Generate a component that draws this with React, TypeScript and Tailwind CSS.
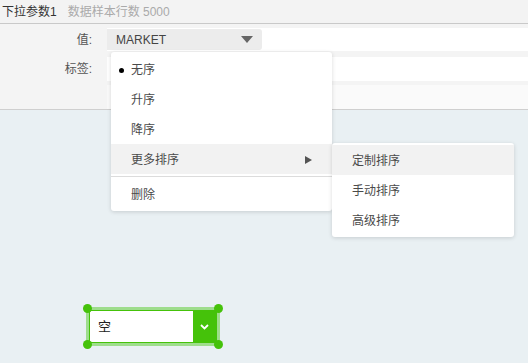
import React from 'react'

const font = { fontFamily: '"Liberation Sans", "Noto Sans CJK SC", sans-serif' }

type Item = { label: string; checked?: boolean; hover?: boolean; sub?: boolean }

const sortItems: Item[] = [
  { label: '无序', checked: true },
  { label: '升序' },
  { label: '降序' },
  { label: '更多排序', hover: true, sub: true },
]

const subItems: Item[] = [
  { label: '定制排序', hover: true },
  { label: '手动排序' },
  { label: '高级排序' },
]

function MenuRow({ item }: { item: Item }) {
  return (
    <div
      className={
        'relative flex items-center h-[30px] pl-[20px] pr-3 pt-px text-[12px] text-[#4a4a4a] ' +
        (item.hover ? 'bg-[#f2f2f2]' : '')
      }
    >
      {item.checked && <span className="absolute left-[8px] top-[14px] w-[5px] h-[5px] rounded-full bg-black" />}
      <span>{item.label}</span>
      {item.sub && (
        <svg className="ml-auto mr-[8px]" width="7" height="8" viewBox="0 0 7 8">
          <path d="M0 0 L7 4 L0 8 Z" fill="#555" />
        </svg>
      )}
    </div>
  )
}

export default function App() {
  return (
    <div className="relative w-[528px] h-[363px] overflow-hidden bg-[#e9f0f3]" style={font}>
      {/* header */}
      <div className="flex items-center h-[24px] bg-[#f3f3f3] border-b border-[#c9c9c9] text-[12px]">
        <span className="pl-[2px] text-[#333]">下拉参数1</span>
        <span className="pl-[11px] text-[#aaa]">数据样本行数 5000</span>
      </div>

      {/* form panel */}
      <div className="bg-[#f4f4f4] border-b border-[#cfcfcf] pt-[4px]">
        <div className="flex items-center h-[23px]">
          <div className="w-[92px] text-right text-[12px] text-[#555]">值:</div>
          <div className="ml-[15px] flex-1 h-full bg-white flex items-center">
            <div className="flex items-center w-[155px] h-[21px] bg-[#ececec] rounded-r-[3px] pl-[9px] pr-[9px] text-[12px] text-[#444]">
              <span>MARKET</span>
              <svg className="ml-auto" width="12" height="7" viewBox="0 0 12 7">
                <path d="M0 0 L12 0 L6 7 Z" fill="#666" />
              </svg>
            </div>
          </div>
        </div>
        <div className="flex items-center h-[24px] mt-[6px]">
          <div className="w-[92px] text-right text-[12px] text-[#555]">标签:</div>
          <div className="ml-[15px] flex-1 h-full bg-white" />
        </div>
        <div className="flex items-center h-[24px] mt-[4px]">
          <div className="w-[92px]" />
          <div className="ml-[15px] flex-1 h-full bg-[#fafafa]" />
        </div>
      </div>

      {/* context menu */}
      <div className="absolute left-[111px] top-[52px] w-[221px] py-[2px] bg-white rounded-[3px] shadow-[0_1px_4px_rgba(0,0,0,0.15)]">
        {sortItems.map((it) => (
          <MenuRow key={it.label} item={it} />
        ))}
        <div className="my-[2px] h-px bg-[#dcdcdc]" />
        <MenuRow item={{ label: '删除' }} />
      </div>

      {/* submenu */}
      <div className="absolute left-[332px] top-[143px] w-[182px] py-[2px] bg-white rounded-[3px] shadow-[0_1px_4px_rgba(0,0,0,0.15)]">
        {subItems.map((it) => (
          <MenuRow key={it.label} item={it} />
        ))}
      </div>

      {/* selected dropdown widget */}
      <div className="absolute left-[86px] top-[307px] w-[134px] h-[39px] border-[3px] border-[#9edd8c]">
        <div className="flex h-full border border-[#45c20a] bg-white">
          <div className="flex-1 flex items-center pl-[8px] text-[13px] text-[#222]">空</div>
          <div className="w-[23px] bg-[#45c20a] flex items-center justify-center">
            <svg width="9" height="6" viewBox="0 0 9 6">
              <path d="M1 1 L4.5 4.5 L8 1" stroke="white" strokeWidth="1.8" fill="none" />
            </svg>
          </div>
        </div>
        <span className="absolute -left-[6px] -top-[6px] w-[9px] h-[9px] rounded-full bg-[#45c20a]" />
        <span className="absolute -right-[6px] -top-[6px] w-[9px] h-[9px] rounded-full bg-[#45c20a]" />
        <span className="absolute -left-[6px] -bottom-[6px] w-[9px] h-[9px] rounded-full bg-[#45c20a]" />
        <span className="absolute -right-[6px] -bottom-[6px] w-[9px] h-[9px] rounded-full bg-[#45c20a]" />
      </div>
    </div>
  )
}
